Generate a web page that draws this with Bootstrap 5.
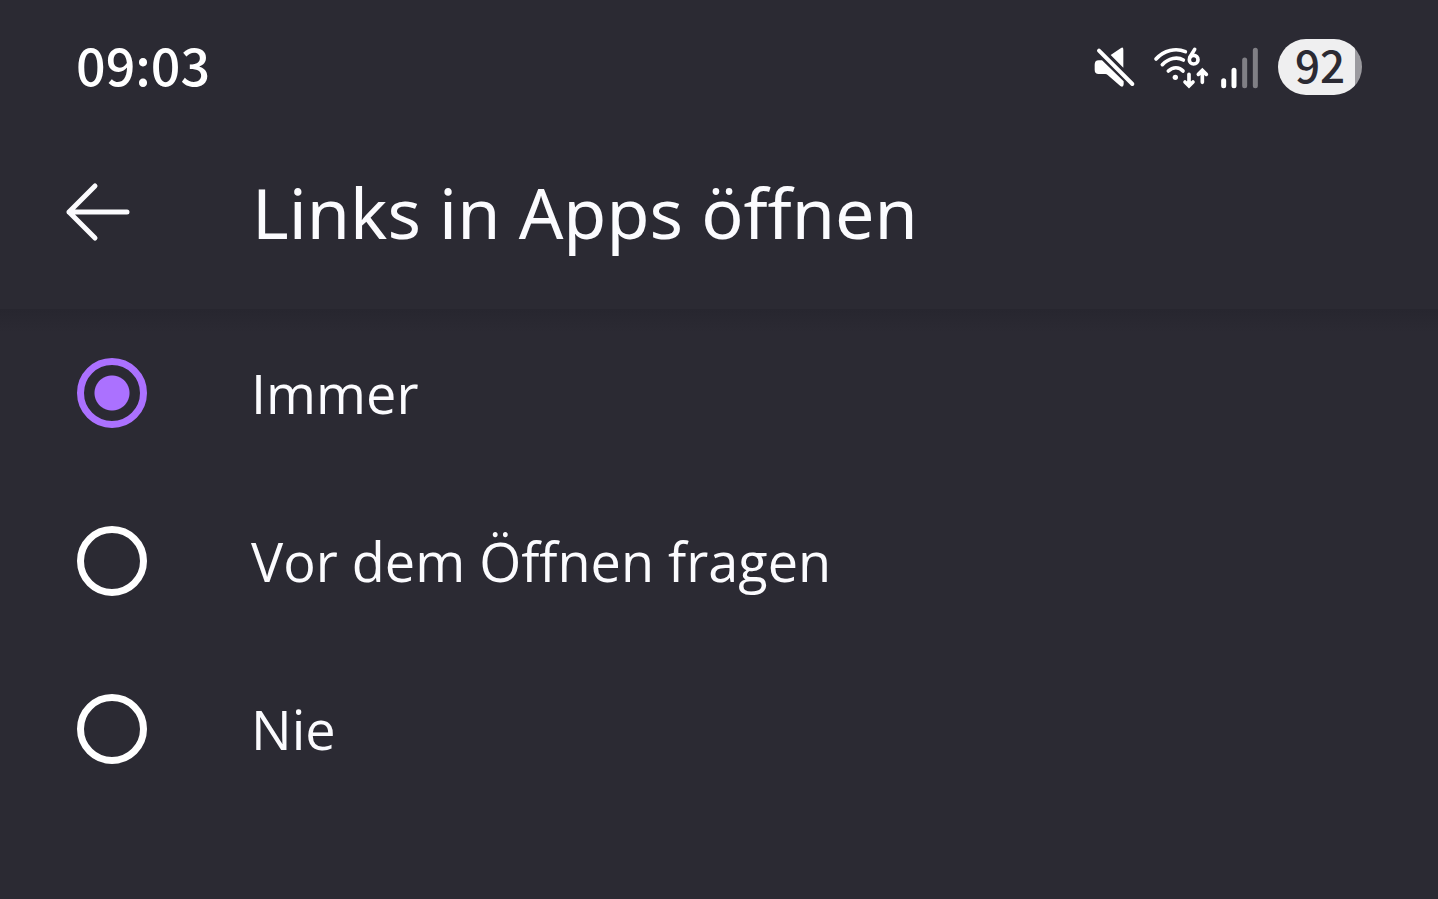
<!DOCTYPE html>
<html lang="de">
<head>
<meta charset="utf-8">
<meta name="viewport" content="width=device-width, initial-scale=1">
<title>Links in Apps öffnen</title>
<link rel="stylesheet" href="https://cdn.jsdelivr.net/npm/bootstrap@5.3.0/dist/css/bootstrap.min.css">
<style>
  body { background: #2b2a33; color: #fbfbfe; font-family: "Noto Sans", sans-serif; font-variant-ligatures: none; }
  .status-bar { height: 134px; padding: 0 76px; color: #fff; font-family: "Noto Sans CJK SC", "Noto Sans", sans-serif; }
  .clock { font-size: 52px; line-height: 64px; font-weight: 500; padding-bottom: 6px; }
  .battery { width: 84px; height: 56px; font-size: 44px; line-height: 50px; font-weight: 500; color: #2b2a33; background: linear-gradient(90deg, #efeff0 77px, #9b9a9f 77px); }
  .tool-bar { height: 156px; padding: 0 64px; }
  .app-head { padding-bottom: 19px; }
  .back-btn { width: 68px; height: 68px; color: inherit; margin-right: 120px; }
  .page-title { font-size: 70px; line-height: 80px; font-weight: 400; }
  .options { background: linear-gradient(#27262f, #2b2a33 24px); }
  .option-row { height: 168px; padding: 0 77px; }
  .option-row label { font-family: "Open Sans", "Noto Sans", sans-serif; font-size: 54px; line-height: 64px; }
  .option-row .form-check-input { width: 70px; height: 70px; border: 7px solid #fff; background: transparent; box-shadow: none; margin-right: 104px; }
  .option-row .form-check-input:checked { border-color: #ab71ff; background: radial-gradient(circle, #ab71ff 17px, transparent 18px); }
</style>
</head>
<body>
<header class="app-head">
  <div class="status-bar d-flex align-items-center justify-content-between">
    <time class="clock">09:03</time>
    <div class="d-flex align-items-center">
      <svg width="44" height="44" viewBox="36 46 132 132" role="img" aria-label="Stumm" class="me-3">
        <path fill="currentColor" d="M92 76 122 56Q130 50 130 60V114ZM56 92H66L131 155V164Q130 175 121 169L83 136Q80 133 76 133H56Q44 133 44 120V105Q44 92 56 92Z"/>
        <path d="M57 63 157 163" stroke="currentColor" stroke-width="12" stroke-linecap="round"/>
      </svg>
      <svg width="58" height="44" viewBox="216 46 174 132" role="img" aria-label="WLAN 6" class="me-2" fill="none" stroke="currentColor" stroke-width="11" stroke-linecap="round">
        <path d="M228 88C252 61 288 54 316 66M247 105C266 85 292 80 310 91M265 124C278 111 298 111 309 124"/>
        <circle cx="286" cy="143" r="8" fill="currentColor" stroke="none"/>
        <circle cx="341" cy="90" r="13"/>
        <path d="M344 59 330 82"/>
        <path d="M327 134V167M315 157 327 169 339 157M367 158V124M355 134 367 122 379 134"/>
      </svg>
      <svg width="44" height="44" viewBox="25 44 132 132" role="img" aria-label="Signal" stroke="currentColor" stroke-width="15" stroke-linecap="round" class="me-3">
        <path d="M42 151V166M73 120V166"/>
        <path d="M105 89V166M137 60V166" stroke="#807f85"/>
      </svg>
      <div class="battery rounded-pill text-center">92</div>
    </div>
  </div>
  <div class="tool-bar d-flex align-items-center">
    <button type="button" class="back-btn btn border-0 p-0 d-flex align-items-center" aria-label="Zurück">
      <svg width="68" height="68" viewBox="0 0 68 68" fill="none" stroke="currentColor" stroke-width="5" stroke-linecap="round" stroke-linejoin="round"><path d="M63 34H5M31 8 5 34 31 60"/></svg>
    </button>
    <h1 class="page-title m-0">Links in Apps öffnen</h1>
  </div>
</header>
<main class="options">
  <div class="option-row d-flex align-items-center">
    <input class="form-check-input mt-0 flex-shrink-0" type="radio" name="open" id="always" checked>
    <label for="always">Immer</label>
  </div>
  <div class="option-row d-flex align-items-center">
    <input class="form-check-input mt-0 flex-shrink-0" type="radio" name="open" id="ask">
    <label for="ask">Vor dem Öffnen fragen</label>
  </div>
  <div class="option-row d-flex align-items-center">
    <input class="form-check-input mt-0 flex-shrink-0" type="radio" name="open" id="never">
    <label for="never">Nie</label>
  </div>
</main>
<script src="https://cdn.jsdelivr.net/npm/bootstrap@5.3.0/dist/js/bootstrap.bundle.min.js"></script>
</body>
</html>
